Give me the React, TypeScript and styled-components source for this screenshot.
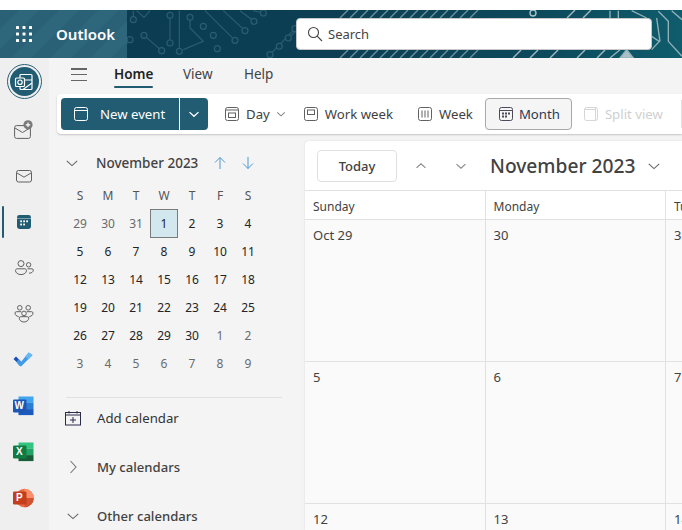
import React from "react";
import styled, { createGlobalStyle } from "styled-components";

const Global = createGlobalStyle`
  html, body { margin: 0; padding: 0; background: #fff; }
  * { box-sizing: border-box; }
  body { font-family: "Noto Sans", "Open Sans", Arial, sans-serif; }
`;

const Page = styled.div`
  width: 682px; height: 530px; overflow: hidden; display: flex; flex-direction: column; background: #f4f4f4;
  padding-top: 10px; position: relative;
  &::before { content: ""; position: absolute; left: 0; right: 0; top: 0; height: 10px; background: #fff; }
`;
const Header = styled.header`display: flex; height: 48px; flex: none;`;
const Brand = styled.div`
  width: 127px; flex: none; display: flex; align-items: center; color: #fff;
  background: repeating-linear-gradient(135deg, #2a6177 0 14px, #2e667c 14px 28px);
`;
const Waffle = styled.div`width: 48px; margin-right: 8px; display: flex; justify-content: center; align-items: center;`;
const BrandName = styled.span`font-size: 15px; font-weight: 600; position: relative; top: -0.5px;`;
const Banner = styled.div`flex: 1; position: relative; background: #0c3f54; overflow: hidden; padding: 8px 0 0 169px;`;
const BannerArt = styled.svg`position: absolute; left: 0; top: 0;`;
const Search = styled.div`
  position: relative; width: 356px; height: 32px; background: #fff; border-radius: 4px; border: 1px solid #c8c8c8;
  display: flex; align-items: center; gap: 5px; padding-left: 10px; font-size: 13px; color: #444;
`;

const Main = styled.div`flex: 1; display: flex; min-height: 0;`;
const Rail = styled.nav`width: 49px; flex: none; background: #efefef; display: flex; flex-direction: column; align-items: center; padding-top: 6px;`;
const OutlookBadge = styled.div`
  width: 35px; height: 35px; border-radius: 50%; border: 1.5px solid #2a6177; padding: 2px; flex: none; margin: 0 1px 8px 0;
  display: flex; & > div { flex: 1; background: #215c72; border-radius: 50%; display: flex; align-items: center; justify-content: center; }
`;
const RailItem = styled.div<{ $active?: boolean; $shift?: number }>`
  width: 49px; height: 46px; flex: none; display: flex; align-items: center; justify-content: center; position: relative; padding-right: ${(p) => p.$shift ?? 1}px;
  ${(p) => p.$active && `&::before { content: ""; position: absolute; left: 2px; top: 7px; width: 2px; height: 32px; background: #215c72; border-radius: 1px; }`}
`;

const Content = styled.div`flex: 1; min-width: 0; display: flex; flex-direction: column;`;
const Tabs = styled.div`height: 36px; flex: none; display: flex; align-items: flex-start; padding-left: 22px; font-size: 13.5px; color: #3c3c3c;`;
const Burger = styled.div`width: 16px; margin-top: 10px; height: 13px; display: flex; flex-direction: column; justify-content: space-between; margin-right: 27px; & > i { display: block; height: 1.5px; background: #666; }`;
const Tab = styled.div<{ $active?: boolean; $w: number }>`
  width: ${(p) => p.$w}px; padding-top: 7px; height: 31px; position: relative; font-weight: ${(p) => (p.$active ? 600 : 400)}; color: ${(p) => (p.$active ? "#222" : "#424242")};
  ${(p) => p.$active && `&::after { content: ""; position: absolute; left: 0; top: 28px; width: 39px; height: 2px; border-radius: 1px; background: #215c72; }`}
`;
const Toolbar = styled.div`
  height: 40px; flex: none; margin-left: 8px; background: #fff; border-radius: 4px 0 0 4px; box-shadow: 0 1px 2px rgba(0,0,0,.2);
  display: flex; align-items: center; padding-left: 4px; font-size: 13.2px; color: #424242; position: relative; z-index: 1;
`;
const NewEvent = styled.div`
  width: 118px; height: 32px; flex: none; background: #215c72; color: #fff; border-radius: 4px 0 0 4px; display: flex; align-items: center; padding-left: 12px; gap: 11px;
`;
const NewDrop = styled.div`
  width: 28px; height: 32px; flex: none; margin-left: 1px; background: #215c72; border-radius: 0 4px 4px 0; display: flex; align-items: center; justify-content: center;
`;
const ToolItem = styled.div<{ $ml: number; $disabled?: boolean; $gap?: number }>`
  margin-left: ${(p) => p.$ml}px; display: flex; align-items: center; gap: ${(p) => p.$gap ?? 6}px; color: ${(p) => (p.$disabled ? "#d0d0d0" : "#424242")}; white-space: nowrap;
`;
const MonthBtn = styled.div`
  margin-left: 12px; width: 87px; height: 32px; flex: none; display: flex; align-items: center; gap: 5px; padding-left: 12px; background: #f5f5f5; border: 1px solid #a8a8a8; border-radius: 4px; color: #2b3a55;
`;
const ToolDivider = styled.div`position: absolute; left: 624px; top: 6px; width: 1px; height: 28px; background: #e0e0e0;`;

const Lower = styled.div`flex: 1; min-height: 0; display: flex;`;
const Side = styled.aside`width: 256px; flex: none; padding: 0 0 0 16px; color: #242424;`;
const MiniHead = styled.div`display: flex; align-items: center; padding-top: 16px; height: 42px; font-size: 13.5px; font-weight: 500; color: #424242;`;
const MiniTitle = styled.span`margin-left: 17px; width: 117px; white-space: nowrap;`;
const ArrowGap = styled.span`width: 14px;`;
const MiniGrid = styled.div`display: grid; grid-template-columns: repeat(7, 28px); grid-auto-rows: 28px; width: 196px; margin-top: 6px; margin-left: 1px; font-size: 12px;`;
const DayHead = styled.div`display: flex; align-items: center; justify-content: center; color: #555; margin-top: -2px;`;
const MiniDay = styled.div<{ $muted?: boolean; $sel?: boolean }>`
  display: flex; align-items: center; justify-content: center; color: ${(p) => (p.$muted ? "#6b6b6b" : "#242424")};
  margin-top: -1px;
  ${(p) => p.$sel && `background: #d3e8ee; border: 1px solid #7a7a7a;`}
`;
const SideRule = styled.div`height: 1px; background: #e0e0e0; width: 216px; margin: 19px 0 0 1px;`;
const AddRow = styled.div`height: 40px; display: flex; align-items: center; gap: 16px; font-size: 13.2px; color: #333;`;
const Section = styled.div<{ $mt?: number }>`height: 49px; margin-top: ${(p) => p.$mt ?? 0}px; display: flex; align-items: center; font-size: 13.1px; font-weight: 500; color: #424242;`;
const SectionIcon = styled.div`width: 32px; display: flex; justify-content: center; padding-right: 16px;`;

const Calendar = styled.section`flex: 1; min-width: 0; margin-top: 7px; background: #fff; border-radius: 4px 0 0 0; box-shadow: 0 0 2px rgba(0,0,0,.12); display: flex; flex-direction: column;`;
const CalBar = styled.div`height: 50px; flex: none; display: flex; align-items: center; padding-left: 12px; border-bottom: 1px solid #e1e1e1;`;
const TodayBtn = styled.div`width: 80px; height: 32px; border: 1px solid #e0e0e0; border-radius: 4px; display: flex; align-items: center; justify-content: center; font-size: 13px; font-weight: 500; color: #424242; margin-right: 16px;`;
const NavBtn = styled.div`width: 16px; display: flex; justify-content: center; margin-right: 24px;`;
const CalTitle = styled.div`font-size: 19.2px; font-weight: 500; color: #424242; margin-left: -3px; margin-right: 12px; white-space: nowrap;`;
const WeekRow = styled.div`height: 29px; flex: none; display: grid; grid-template-columns: repeat(3, 180.5px); border-bottom: 1px solid #e1e1e1; font-size: 12px; color: #424242;`;
const WeekCell = styled.div`padding: 7px 0 0 8px; border-right: 1px solid #e1e1e1; white-space: nowrap; overflow: hidden;`;
const MonthGrid = styled.div`flex: 1; display: grid; grid-template-columns: repeat(3, 180.5px); grid-auto-rows: 142px; background: #fafafa;`;
const MonthCell = styled.div`padding: 6px 0 0 8px; border-right: 1px solid #e1e1e1; border-bottom: 1px solid #e1e1e1; font-size: 13px; color: #424242; white-space: nowrap; overflow: hidden;`;

const Chevron = ({ dir, size = 14, color = "#666", w = 1.1 }: { dir: "up" | "down" | "right"; size?: number; color?: string; w?: number }) => {
  const d = dir === "up" ? "M2 10.5 8 5l6 5.5" : dir === "down" ? "M2 5.5 8 11l6-5.5" : "M5.5 2 11 8l-5.5 6";
  return <svg width={size} height={size} viewBox="0 0 16 16" fill="none" stroke={color} strokeWidth={w * 16 / size}><path d={d} /></svg>;
};

const WaffleIcon = () => (
  <svg width="16" height="16" viewBox="0 0 16 16" fill="#fff">
    {[0, 6.5, 13].flatMap((y) => [0, 6.5, 13].map((x) => <rect key={`${x}-${y}`} x={x} y={y} width="3" height="3" rx="0.5" />))}
  </svg>
);

const circuitLines = [
  "M150 22V105", "M210 28V60L250 100L190 125", "M255 8L345 97", "M310 8L375 68", "M360 8L402 40", "M400 8L430 15",
  "M72 82L125 128", "M90 8L72 28L50 8", "M525 62L450 140", "M505 90L560 40", "M178 130V8", "M40 35V8", "M30 95L10 120",
];
const circuitDots: [number, number][] = [
  [40, 35], [150, 22], [210, 28], [250, 55], [280, 82], [345, 97], [375, 68], [402, 40], [430, 15], [72, 82], [125, 128],
  [150, 105], [178, 130], [292, 122], [30, 95], [505, 90], [478, 115], [450, 140], [525, 62],
];
const rightLines = [
  "M30 8V30", "M55 8V30", "M95 8L140 30", "M155 85L178 100L155 125", "M175 10L205 40V100L246 145", "M215 8L246 35", "M30 150L60 125", "M170 30L180 100",
];

const BannerGraphic = () => {
  const hatch = [] as React.ReactNode[];
  for (let x = 213; x < 345; x += 10) {
    hatch.push(<path key={`t${x}`} d={`M${x + 8} 0 L${x} 8`} stroke="#8aa8b2" strokeOpacity={0.75} strokeWidth="1.4" />);
    hatch.push(<path key={`b${x}`} d={`M${x + 8} 40 L${x} 48`} stroke="#8aa8b2" strokeOpacity={0.75} strokeWidth="1.4" />);
  }
  for (const x of [386, 403, 423, 450, 470]) {
    hatch.push(<path key={`b${x}`} d={`M${x + 8} 40 L${x} 48`} stroke="#a0b8c0" strokeWidth="1.4" />);
  }
  for (const x of [440, 456]) {
    hatch.push(<path key={`t${x}`} d={`M${x + 8} 0 L${x} 8`} stroke="#a0b8c0" strokeWidth="1.4" />);
  }
  return (
    <BannerArt width="555" height="48" viewBox="0 0 555 48" fill="none">
      <defs>
        <linearGradient id="bg" x1="0" x2="1" y1="0" y2="0">
          <stop offset="0" stopColor="#0b3c52" />
          <stop offset="0.4" stopColor="#0c3f54" />
          <stop offset="0.75" stopColor="#0c4a5c" />
          <stop offset="1" stopColor="#0f5c6c" />
        </linearGradient>
      </defs>
      <rect width="555" height="48" fill="url(#bg)" />
      <g transform="translate(-7 -2) scale(0.3333)" stroke="#2b5d72" strokeWidth="3.6">
        {circuitLines.map((d) => <path key={d} d={d} />)}
        {circuitDots.map(([x, y]) => <circle key={`${x}-${y}`} cx={x} cy={y} r="9" fill="#0c3f54" />)}
      </g>
      {hatch}
      <g transform="translate(473 -2) scale(0.3333)" stroke="#93b2ba" strokeWidth="4">
        {rightLines.map((d) => <path key={d} d={d} />)}
        <path d="M60 150L80 125L100 150Z" fill="#a9c0c6" />
      </g>
      <circle cx="406" cy="3" r="3" stroke="#a9c0c6" strokeWidth="1.4" />
    </BannerArt>
  );
};

const stroke = "#616161";
const OutlookGlyph = () => (
  <svg width="20" height="20" viewBox="0 0 20 20" fill="none" stroke="#fff" strokeWidth="1.2">
    <rect x="6" y="2.5" width="12" height="15" rx="1" />
    <path d="M6 8h12M9 17.5 18 11" />
    <rect x="1.5" y="6" width="9" height="8.5" rx="1" fill="#215c72" />
    <circle cx="6" cy="10.2" r="2.2" />
  </svg>
);
const NewMail = () => (
  <svg width="20" height="20" viewBox="0 0 20 20" fill="none">
    <rect x="0.6" y="5.6" width="15.8" height="12.8" rx="2" stroke={stroke} />
    <path d="M1 8 8.5 12.5 16 8" stroke={stroke} />
    <circle cx="14" cy="4.8" r="4.6" fill="#7a7a7a" />
    <path d="M14 2.6v4.4M11.8 4.8h4.4" stroke="#fff" strokeWidth="1.2" />
  </svg>
);
const Mail = () => (
  <svg width="18" height="18" viewBox="0 0 18 18" fill="none" stroke={stroke}>
    <rect x="1.5" y="3.5" width="15" height="11.5" rx="2" />
    <path d="M2 6 9 10.2 16 6" />
  </svg>
);
const CalFilled = () => (
  <svg width="16" height="16" viewBox="0 0 16 16">
    <rect x="1" y="1" width="14" height="14" rx="2.4" fill="#215c72" />
    <rect x="1" y="4" width="14" height="0.8" fill="#fff" opacity=".5" />
    {[4.2, 7.2, 10.2].map((x) => <rect key={x} x={x} y="6.4" width="1.8" height="1.8" fill="#fff" />)}
    {[4.2, 7.2].map((x) => <rect key={x} x={x} y="9.6" width="1.8" height="1.8" fill="#fff" />)}
  </svg>
);
const People = () => (
  <svg width="20" height="20" viewBox="0 0 20 20" fill="none" stroke={stroke}>
    <circle cx="7" cy="5.6" r="3" />
    <circle cx="14.6" cy="6.8" r="2.2" />
    <path d="M1.5 12.4c0-.9.7-1.6 1.6-1.6h7.8c.9 0 1.6.7 1.6 1.6 0 2.4-2.4 4.2-5.5 4.2s-5.5-1.8-5.5-4.2Z" />
    <path d="M13.5 10.8h4.4c.8 0 1.4.6 1.4 1.3 0 1.9-1.8 3.1-4.3 3.1" />
  </svg>
);
const Groups = () => (
  <svg width="20" height="20" viewBox="0 0 20 20" fill="none" stroke={stroke}>
    <circle cx="5.8" cy="3.8" r="2.3" />
    <circle cx="14.2" cy="3.8" r="2.3" />
    <circle cx="10" cy="9.4" r="2.3" />
    <path d="M7.3 7.7H2.4c-.9 0-1.4.6-1.4 1.3 0 2 1.5 3.3 3.6 3.5" />
    <path d="M12.7 7.7h4.9c.9 0 1.4.6 1.4 1.3 0 2-1.5 3.3-3.6 3.5" />
    <path d="M5.2 14c0-.8.6-1.3 1.3-1.3h7c.7 0 1.3.5 1.3 1.3 0 2.2-2.1 4-4.8 4s-4.8-1.8-4.8-4Z" />
  </svg>
);
const TodoIcon = () => (
  <svg width="20" height="16" viewBox="0 0 20 16">
    <path d="M0.5 7 3 4.5l3 3-2.5 2.5Z" fill="#1c4fb8" />
    <path d="M3.5 10 6 7.5l2.5 2.5L8 14Z" fill="#2564cf" />
    <path d="M6 13.5 3.5 10 6 7.5l2.2 2.2L15.7.5 19.5 3 8 14.5Z" fill="#3f9ae8" />
    <path d="M15.7.5 19.5 3l-4 4.5-3.3-2.8Z" fill="#64b8f4" />
  </svg>
);
type OfficeProps = { back: string; letter: string; mid: string; dark: string; front: string; round?: boolean };
const OfficeIcon = ({ back, mid, dark, front, round }: OfficeProps) => (
  <svg width="21" height="20" viewBox="0 0 21 20">
    {round ? (
      <>
        <circle cx="11.5" cy="10" r="9.3" fill={mid} />
        <path d="M11.5.7a9.3 9.3 0 0 1 9.3 9.3h-9.3Z" fill={back} />
        <path d="M11.5 10h9.3a9.3 9.3 0 0 1-9.3 9.3Z" fill={dark} />
      </>
    ) : (
      <>
        <rect x="5.5" y="0.5" width="15" height="6.3" fill={back} />
        <rect x="5.5" y="6.8" width="15" height="6.3" fill={mid} />
        <rect x="5.5" y="13.1" width="15" height="6" fill={dark} />
      </>
    )}
    <rect x="0" y="3.5" width="13.5" height="13" rx="1.2" fill={front} />
  </svg>
);
const OfficeBox = styled.div`position: relative; width: 21px; height: 20px;`;
const OfficeLetter = styled.span`position: absolute; left: 0; top: 3.5px; width: 13.5px; height: 13px; display: flex; align-items: center; justify-content: center; color: #fff; font-size: 10px; font-weight: 700; line-height: 1; font-family: "Liberation Sans", Arial, sans-serif;`;
const Office = (p: OfficeProps) => (
  <OfficeBox><OfficeIcon {...p} /><OfficeLetter>{p.letter}</OfficeLetter></OfficeBox>
);

const ViewIcon = ({ kind, color = "#616161" }: { kind: "new" | "day" | "work" | "week" | "month" | "split"; color?: string }) => (
  <svg width="16" height="16" viewBox="0 0 16 16" fill="none" stroke={color} strokeWidth="1">
    <rect x="1.5" y="1.5" width="13" height="13" rx="2" />
    {kind === "new" && <path d="M1.5 4.5h13" />}
    {kind === "day" && <><path d="M1.5 4h13" /><rect x="4.5" y="7" width="7" height="4.5" /></>}
    {kind === "work" && <rect x="4.5" y="4" width="7" height="4.5" />}
    {kind === "week" && <path d="M5 4.5v7M8 4.5v7M11 4.5v7" />}
    {kind === "month" && <><path d="M1.5 4.5h13" />{[4.5, 7.5, 10.5].map((x) => <rect key={x} x={x} y="7" width="1" height="1" fill={color} />)}{[4.5, 7.5].map((x) => <rect key={x} x={x} y="10" width="1" height="1" fill={color} />)}</>}
    {kind === "split" && <path d="M1.5 3.5h11M12.5 1.5v13" />}
  </svg>
);

const Arrow = ({ up }: { up?: boolean }) => (
  <svg width="14" height="14" viewBox="0 0 14 14" fill="none" stroke="#4a9ad4" strokeWidth="1">
    {up ? <path d="M7 13V1.5M2 6.5l5-5 5 5" /> : <path d="M7 1v11.5M2 7.5l5 5 5-5" />}
  </svg>
);

const AddCal = () => (
  <svg width="16" height="16" viewBox="0 0 16 16" fill="none" stroke="#2b2b4a" strokeWidth="1">
    <rect x="0.5" y="2.5" width="15" height="12.5" />
    <path d="M0.5 5h15M4 1v2.5M12 1v2.5M8 7v6M5 10h6" />
  </svg>
);

const weeks = [
  [29, 30, 31, 1, 2, 3, 4], [5, 6, 7, 8, 9, 10, 11], [12, 13, 14, 15, 16, 17, 18],
  [19, 20, 21, 22, 23, 24, 25], [26, 27, 28, 29, 30, 1, 2], [3, 4, 5, 6, 7, 8, 9],
];

export default function App() {
  return (
    <Page>
      <Global />
      <Header>
        <Brand>
          <Waffle><WaffleIcon /></Waffle>
          <BrandName>Outlook</BrandName>
        </Brand>
        <Banner>
          <BannerGraphic />
          <Search>
            <svg width="16" height="16" viewBox="0 0 16 16" fill="none" stroke="#444" strokeWidth="1.1"><circle cx="6.5" cy="6.5" r="5" /><path d="m10.2 10.2 4.8 4.8" /></svg>
            Search
          </Search>
        </Banner>
      </Header>
      <Main>
        <Rail>
          <OutlookBadge><div><OutlookGlyph /></div></OutlookBadge>
          <RailItem><NewMail /></RailItem>
          <RailItem><Mail /></RailItem>
          <RailItem $active><CalFilled /></RailItem>
          <RailItem><People /></RailItem>
          <RailItem><Groups /></RailItem>
          <RailItem $shift={3}><TodoIcon /></RailItem>
          <RailItem $shift={3}><Office letter="W" back="#41a5ee" mid="#2b7cd3" dark="#185abd" front="#1e56b4" /></RailItem>
          <RailItem $shift={3}><Office letter="X" back="#33c481" mid="#21a366" dark="#185c37" front="#107c41" /></RailItem>
          <RailItem $shift={3}><Office letter="P" back="#ff8f6b" mid="#ed6c47" dark="#d35230" front="#c43e1c" round /></RailItem>
        </Rail>
        <Content>
          <Tabs>
            <Burger><i /><i /><i /></Burger>
            <Tab $active $w={69}>Home</Tab>
            <Tab $w={61}>View</Tab>
            <Tab $w={40}>Help</Tab>
          </Tabs>
          <Toolbar>
            <NewEvent><ViewIcon kind="new" color="#fff" />New event</NewEvent>
            <NewDrop><Chevron dir="down" size={12} color="#fff" w={1.3} /></NewDrop>
            <ToolItem $ml={16}><ViewIcon kind="day" />Day<Chevron dir="down" size={10} color="#888" /></ToolItem>
            <ToolItem $ml={17}><ViewIcon kind="work" />Work week</ToolItem>
            <ToolItem $ml={24}><ViewIcon kind="week" />Week</ToolItem>
            <MonthBtn><ViewIcon kind="month" color="#4a4a5a" />Month</MonthBtn>
            <ToolItem $ml={11} $disabled><ViewIcon kind="split" color="#d6d6d6" />Split view</ToolItem>
            <ToolDivider />
          </Toolbar>
          <Lower>
            <Side>
              <MiniHead>
                <Chevron dir="down" size={14} color="#666" />
                <MiniTitle>November 2023</MiniTitle>
                <Arrow up />
                <ArrowGap />
                <Arrow />
              </MiniHead>
              <MiniGrid>
                {["S", "M", "T", "W", "T", "F", "S"].map((d, i) => <DayHead key={i}>{d}</DayHead>)}
                {weeks.flatMap((w, r) => w.map((d, c) => {
                  const muted = (r === 0 && c < 3) || (r === 4 && c > 4) || r === 5;
                  return <MiniDay key={`${r}-${c}`} $muted={muted} $sel={r === 0 && c === 3}>{d}</MiniDay>;
                }))}
              </MiniGrid>
              <SideRule />
              <AddRow><AddCal />Add calendar</AddRow>
              <Section $mt={4}><SectionIcon><Chevron dir="right" size={16} color="#777" /></SectionIcon>My calendars</Section>
              <Section><SectionIcon><Chevron dir="down" size={14} color="#666" /></SectionIcon>Other calendars</Section>
            </Side>
            <Calendar>
              <CalBar>
                <TodayBtn>Today</TodayBtn>
                <NavBtn><Chevron dir="up" size={12} color="#888" /></NavBtn>
                <NavBtn><Chevron dir="down" size={12} color="#888" /></NavBtn>
                <CalTitle>November 2023</CalTitle>
                <Chevron dir="down" size={14} color="#666" />
              </CalBar>
              <WeekRow>
                <WeekCell>Sunday</WeekCell>
                <WeekCell>Monday</WeekCell>
                <WeekCell>Tuesday</WeekCell>
              </WeekRow>
              <MonthGrid>
                {["Oct 29", "30", "31", "5", "6", "7", "12", "13", "14"].map((d) => <MonthCell key={d}>{d}</MonthCell>)}
              </MonthGrid>
            </Calendar>
          </Lower>
        </Content>
      </Main>
    </Page>
  );
}
